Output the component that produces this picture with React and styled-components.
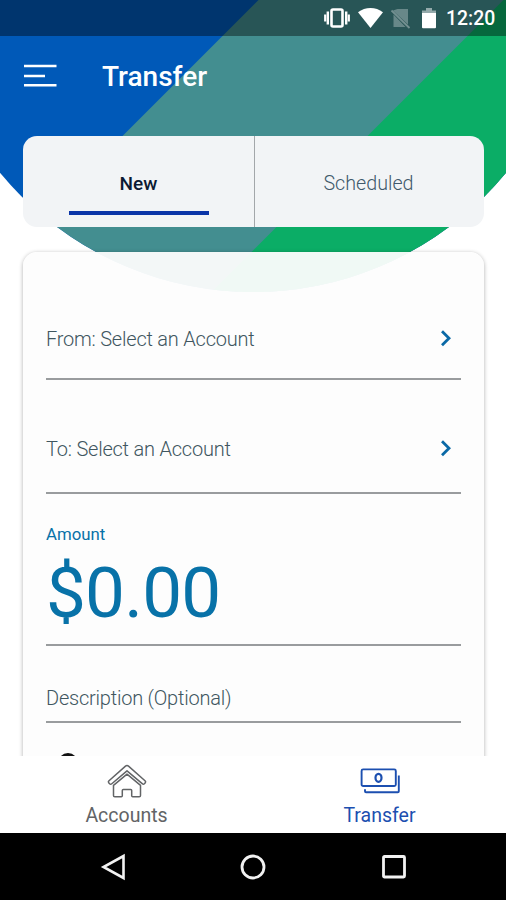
import React, {useState} from "react";
import styled, {createGlobalStyle} from "styled-components";

const GlobalStyle = createGlobalStyle`
  * {
    box-sizing: border-box;
  }

  body {
    margin: 0;
    background: #fff;
    font-family: Roboto, "Liberation Sans", sans-serif;
  }

  button {
    padding: 0;
    border: none;
    background: none;
    font-family: inherit;
    cursor: pointer;
  }
`;

const Screen = styled.div`
  position: relative;
  isolation: isolate;
  display: flex;
  flex-direction: column;
  width: 506px;
  height: 900px;
  overflow: hidden;
`;

const Backdrop = styled.svg`
  position: absolute;
  top: 0;
  left: 0;
  z-index: -1;
`;

const StatusBar = styled.div`
  display: flex;
  justify-content: flex-end;
  height: 36px;
  background: rgba(0, 0, 0, 0.4);
`;

const Clock = styled.span`
  width: 60px;
  padding-top: 1px;
  color: #fff;
  font-size: 19.4px;
  font-weight: 500;
  line-height: 36px;
`;

const Header = styled.header`
  display: flex;
  align-items: center;
  gap: 45px;
  height: 100px;
  padding: 0 0 20px 24px;
`;

const MenuButton = styled.button`
  display: flex;
`;

const Title = styled.h1`
  margin: 1px 0 0;
  color: #fff;
  font-size: 28px;
  font-weight: 500;
  line-height: 36px;
`;

const Tabs = styled.div`
  display: flex;
  flex-shrink: 0;
  height: 91px;
  margin: 0 22px 0 23px;
  border-radius: 14px;
  background: #f2f4f6;
  overflow: hidden;
`;

const Tab = styled.button`
  display: flex;
  flex: 0 0 231px;
  flex-direction: column;
  align-items: center;
  padding-top: 34px;
  color: ${({$active}) => ($active ? "#0b1a33" : "#40596b")};
  font-size: ${({$active}) => ($active ? "19px" : "19.7px")};
  font-weight: ${({$active}) => ($active ? 500 : 300)};
  line-height: 28px;

  & + & {
    flex: 1;
    padding-right: 2px;
    border-left: 1px solid #a3a7aa;
  }

  &::after {
    content: "";
    width: 140px;
    height: 4px;
    margin-top: 13px;
    background: ${({$active}) => ($active ? "#0a35a8" : "transparent")};
  }
`;

const Scroll = styled.main`
  flex: 1;
  min-height: 0;
  padding: 25px 22px 0 23px;
  overflow: hidden;
`;

const Card = styled.section`
  height: 560px;
  padding: 0 23px;
  border-radius: 14px;
  background: rgba(253, 253, 253, 0.95);
  box-shadow: 0 1px 4px rgba(0, 0, 0, 0.32);
`;

const Field = styled.div`
  display: flex;
  align-items: flex-end;
  justify-content: space-between;
  height: ${({$height}) => $height}px;
  padding-bottom: ${({$bottom}) => $bottom}px;
  border-bottom: 2px solid #999c9e;
  color: #40565f;
  font-size: 20px;
  font-weight: 300;
  letter-spacing: -0.22px;
  line-height: 28px;
`;

const Chevron = styled.svg`
  margin: 0 9px 6px 0;
`;

const AmountField = styled.label`
  display: flex;
  flex-direction: column;
  height: 152px;
  padding-top: 30px;
  border-bottom: 2px solid #999c9e;
  color: #0872a8;
`;

const AmountLabel = styled.span`
  font-size: 16.8px;
  line-height: 20px;
`;

const Amount = styled.span`
  font-size: 71px;
  letter-spacing: -0.8px;
  line-height: 97px;
`;

const Toggle = styled.div`
  width: 20px;
  height: 20px;
  margin: 30px 0 0 12px;
  border: 3px solid #111;
  border-radius: 50%;
`;

const BottomNav = styled.nav`
  display: flex;
  flex-shrink: 0;
  height: 77px;
  background: #fff;
`;

const NavItem = styled.button`
  display: flex;
  flex: 1;
  flex-direction: column;
  align-items: center;
  padding-top: 8px;
  color: ${({$active}) => ($active ? "#1c4fb0" : "#626466")};
  font-size: 19.5px;
  line-height: 28px;

  svg {
    margin-bottom: 2px;
  }
`;

const SystemBar = styled.div`
  display: flex;
  flex-shrink: 0;
  align-items: center;
  justify-content: space-around;
  height: 67px;
  padding: 0 42px 0 43px;
  background: #000;
`;

const StatusIcons = () => (
  <svg width="140" height="36" viewBox="306 0 140 36">
    <rect x="331.5" y="9.5" width="11" height="17" rx="1.5" fill="none" stroke="#fff" strokeWidth="2.6" />
    <path d="M327.8 11.5v13M346.2 11.5v13" stroke="#fff" strokeWidth="2.4" />
    <path d="M325.2 14.5v7M348.8 14.5v7" stroke="#fff" strokeWidth="2.2" />
    <path d="M358 12.3c7.2-5.7 17.8-5.7 25 0L370.5 28z" fill="#fff" />
    <path d="M397.5 9H408v15.5L393 10.5zM393.5 14.5L405.5 27h-12z" fill="#fff" opacity="0.3" />
    <path d="M391.5 10.5l18 17.5" stroke="#fff" strokeWidth="1.8" opacity="0.35" />
    <path d="M426 8h6v2.5h4v3h-14v-3h4z" fill="#fff" opacity="0.5" />
    <path d="M422 13h14v14.2q0 1-1 1h-12q-1 0-1-1z" fill="#fff" />
  </svg>
);

const ChevronIcon = () => (
  <Chevron width="12" height="17" viewBox="0 0 12 17">
    <path d="M2 1.2L9 8.2L2 15.2" fill="none" stroke="#0a69a6" strokeWidth="2.8" />
  </Chevron>
);

const HouseIcon = () => (
  <svg width="40" height="36" viewBox="0 0 40 36" fill="none" stroke="currentColor" strokeWidth="1.5" strokeLinejoin="round">
    <path d="M20 1.5q.8 0 1.5.6L38 16.8q1.1 1 .1 2.1l-.7.8q-1 1-2.2 0L20 6.9L4.8 19.7q-1.2 1-2.2 0l-.7-.8q-1-1.1.1-2.1L18.5 2.1q.7-.6 1.5-.6z" />
    <path d="M20 10.2L6.5 21.3v10.2q0 1.3 1.3 1.3h6.5q1 0 1-1v-5.4q0-1 1-1h7.4q1 0 1 1v5.4q0 1 1 1h6.5q1.3 0 1.3-1.3V21.3z" />
  </svg>
);

const CashIcon = () => (
  <svg width="40" height="36" viewBox="0 0 40 36" fill="none" stroke="currentColor" strokeWidth="1.9" strokeLinejoin="round">
    <rect x="1.6" y="5.4" width="34.2" height="16.6" rx="1.5" />
    <ellipse cx="18.5" cy="13.8" rx="3" ry="4" strokeWidth="2.2" />
    <path d="M38.8 11.5v15.8q0 1-1 1H6q-1 0-1-1v-2" />
  </svg>
);

const App = () => {
  const [tab, setTab] = useState("new");
  const [page, setPage] = useState("transfer");

  return (
    <>
      <GlobalStyle />
      <Screen>
        <Backdrop width="506" height="300" viewBox="0 0 506 300">
          <clipPath id="dome">
            <circle cx="253" cy="-36" r="328" />
          </clipPath>
          <g clipPath="url(#dome)">
            <rect width="506" height="300" fill="#0059b8" />
            <path d="M258.5 0H506V300H-41.5z" fill="#438e90" />
            <path d="M503.5 0H506V300H203.5z" fill="#0bad66" />
          </g>
        </Backdrop>

        <StatusBar>
          <StatusIcons />
          <Clock>12:20</Clock>
        </StatusBar>

        <Header>
          <MenuButton aria-label="Menu">
            <svg width="33" height="24" viewBox="0 0 33 24" stroke="#fff" strokeWidth="2.6">
              <path d="M0 2h32.5M0 12h21M0 21.3h32.5" />
            </svg>
          </MenuButton>
          <Title>Transfer</Title>
        </Header>

        <Tabs>
          <Tab $active={tab === "new"} onClick={() => setTab("new")}>New</Tab>
          <Tab $active={tab === "scheduled"} onClick={() => setTab("scheduled")}>Scheduled</Tab>
        </Tabs>

        <Scroll>
          <Card>
            <Field $height={128} $bottom={25}>
              From: Select an Account
              <ChevronIcon />
            </Field>
            <Field $height={114} $bottom={29}>
              To: Select an Account
              <ChevronIcon />
            </Field>
            <AmountField>
              <AmountLabel>Amount</AmountLabel>
              <Amount>$0.00</Amount>
            </AmountField>
            <Field $height={77} $bottom={9}>Description (Optional)</Field>
            <Toggle />
          </Card>
        </Scroll>

        <BottomNav>
          <NavItem $active={page === "accounts"} onClick={() => setPage("accounts")}>
            <HouseIcon />
            Accounts
          </NavItem>
          <NavItem $active={page === "transfer"} onClick={() => setPage("transfer")}>
            <CashIcon />
            Transfer
          </NavItem>
        </BottomNav>

        <SystemBar>
          <svg width="26" height="28" viewBox="0 0 26 28" fill="none" stroke="#f2f2f2" strokeWidth="2.6">
            <path d="M23.5 3v22L3.5 14z" />
          </svg>
          <svg width="26" height="26" viewBox="0 0 26 26" fill="none" stroke="#f2f2f2" strokeWidth="2.8">
            <circle cx="13" cy="13" r="11" />
          </svg>
          <svg width="26" height="26" viewBox="0 0 26 26" fill="none" stroke="#f2f2f2" strokeWidth="2.8">
            <rect x="2.5" y="2.5" width="21" height="20.5" rx="1" />
          </svg>
        </SystemBar>
      </Screen>
    </>
  );
};

export default App;
